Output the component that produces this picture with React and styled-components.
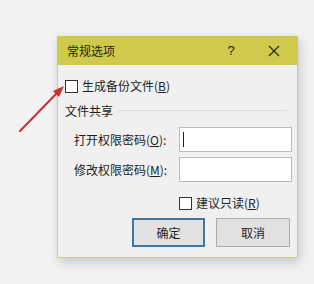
import React from "react";
import styled, { createGlobalStyle } from "styled-components";

const Global = createGlobalStyle`
  html, body { margin: 0; padding: 0; background: #f2f2f2; }
  body { font-family: "Noto Sans CJK SC", "Noto Sans", sans-serif; }
  #root { width: 314px; height: 284px; }
`;

const Page = styled.div`
  position: relative;
  width: 314px;
  height: 284px;
  padding: 36px 0 0 57px;
  box-sizing: border-box;
  background: #f2f2f2;
`;

const Dialog = styled.div`
  width: 241px;
  height: 222px;
  box-sizing: border-box;
  border: 1px solid #d2cf84;
  background: #f0f0f0;
  display: flex;
  flex-direction: column;
  box-shadow: 2px 4px 10px rgba(0, 0, 0, 0.18);
`;

const TitleBar = styled.div`
  height: 30px;
  margin: -1px -1px 0 -1px;
  background: #cfca4b;
  display: flex;
  align-items: center;
  padding-left: 10px;
  font-size: 12px;
  color: #1e1e1e;
`;

const Title = styled.span`
  flex: 1;
`;

const Help = styled.span`
  width: 14px;
  margin-right: 30px;
  font-size: 13px;
  text-align: center;
  font-family: "Liberation Sans", sans-serif;
`;

const Close = styled.span`
  width: 12px;
  height: 12px;
  margin-right: 18px;
  display: flex;
`;

const Body = styled.div`
  flex: 1;
  display: flex;
  flex-direction: column;
  padding: 14px 7px 10px 7px;
  font-size: 12px;
  color: #1e1e1e;
`;

const CheckRow = styled.label`
  height: 14px;
  display: flex;
  align-items: center;
  gap: 4px;
  margin-top: ${(p) => p.$mt || 0}px;
  margin-left: ${(p) => p.$ml || 0}px;
  line-height: 14px;
`;

const Box = styled.span`
  width: 11px;
  height: 11px;
  border: 1px solid #333;
  background: #fff;
  flex: none;
`;

const GroupHead = styled.div`
  height: 16px;
  margin-top: 9px;
  display: flex;
  align-items: center;
  gap: 6px;
`;

const Rule = styled.span`
  flex: 1;
  height: 1px;
  background: #dcdcdc;
  margin-right: 3px;
`;

const Fields = styled.div`
  margin-top: 9px;
  display: grid;
  grid-template-columns: 105px 113px;
  row-gap: 5px;
  padding-left: 9px;
  align-items: center;
`;

const Input = styled.div`
  height: 25px;
  box-sizing: border-box;
  border: 1px solid #bdbdbd;
  background: #fff;
  position: relative;
`;

const Caret = styled.span`
  position: absolute;
  left: 3px;
  top: 4px;
  width: 1px;
  height: 15px;
  background: #222;
`;

const Buttons = styled.div`
  margin-top: 8px;
  display: flex;
  justify-content: flex-end;
  gap: 11px;
`;

const Button = styled.button`
  width: ${(p) => p.$w}px;
  height: 29px;
  box-sizing: border-box;
  border: ${(p) => (p.$primary ? "2px solid #3c77a8" : "1px solid #adadad")};
  background: #e1e1e1;
  font-family: inherit;
  font-size: 12px;
  color: #1e1e1e;
  padding: 0;
`;

const Arrow = styled.svg`
  position: absolute;
  left: 0;
  top: 0;
  pointer-events: none;
`;

export default function App() {
  return (
    <Page>
      <Global />
      <Dialog>
        <TitleBar>
          <Title>常规选项</Title>
          <Help>?</Help>
          <Close>
            <svg width="12" height="12" viewBox="0 0 12 12">
              <path d="M1 1 L11 11 M11 1 L1 11" stroke="#222" strokeWidth="1.1" fill="none" />
            </svg>
          </Close>
        </TitleBar>
        <Body>
          <CheckRow>
            <Box />
            <span>生成备份文件(<u>B</u>)</span>
          </CheckRow>
          <GroupHead>
            <span>文件共享</span>
            <Rule />
          </GroupHead>
          <Fields>
            <span>打开权限密码(<u>O</u>):</span>
            <Input>
              <Caret />
            </Input>
            <span>修改权限密码(<u>M</u>):</span>
            <Input />
          </Fields>
          <CheckRow $mt={14} $ml={114}>
            <Box />
            <span>建议只读(<u>R</u>)</span>
          </CheckRow>
          <Buttons>
            <Button $primary $w={73}>确定</Button>
            <Button $w={74}>取消</Button>
          </Buttons>
        </Body>
      </Dialog>
      <Arrow width="314" height="284" viewBox="0 0 314 284">
        <line x1="20" y1="131" x2="57" y2="93" stroke="#c9302c" strokeWidth="2" strokeLinecap="round" />
        <path d="M64 86 L53 91 L59 97 Z" fill="#c9302c" />
      </Arrow>
    </Page>
  );
}
